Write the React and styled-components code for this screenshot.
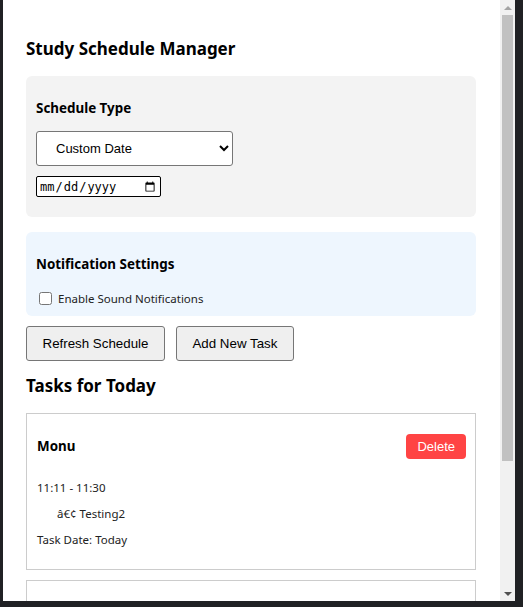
import React from 'react';
import styled, { createGlobalStyle } from 'styled-components';

const GlobalStyle = createGlobalStyle`
    html, body {
        margin:0;
        padding:0;
        background:#202124;
    }
    #root {
        height:607px;
    }
`

const Popup = styled.div`
    margin-left:3px;
    width:512px;
    height:601px;
    background:#fff;
    display:flex;
    font-family:"Noto Sans", "Open Sans", sans-serif;
    color:#000;
`
const Viewport = styled.div`
    flex:1;
    overflow:hidden;
`
const ScrollBar = styled.div`
    width:15px;
    background:#f1f1f1;
    display:flex;
    flex-direction:column;
`
const ArrowButton = styled.div`
    height:15px;
    display:flex;
    align-items:center;
    justify-content:center;
    &::before{
        content:'';
        width:0;
        height:0;
        border-left:4px solid transparent;
        border-right:4px solid transparent;
        ${props => props.$down
            ? 'border-top:4px solid #505050;'
            : 'border-bottom:4px solid #a3a3a3;'}
    }
`
const Thumb = styled.div`
    height:446px;
    margin:0 2px;
    background:#c1c1c1;
`
const Track = styled.div`
    flex:1;
`
const Content = styled.div`
    padding:37px 24px 30px 23px;
`
const Title = styled.h2`
    font-size:17px;
    font-weight:700;
    margin:0 0 15px 0;
    line-height:24px;
`
const Section = styled.div`
    background:${props => props.$tone === 'blue' ? '#eef6fe' : '#f3f3f3'};
    border-radius:6px;
    padding:10px;
    margin-bottom:${props => props.$gap || 15}px;
`
const SectionTitle = styled.h3`
    font-size:13.4px;
    font-weight:700;
    margin:13px 0 ${props => props.$after || 14}px 0;
    line-height:18px;
`
const Select = styled.select`
    display:block;
    width:197px;
    height:35px;
    padding:0 15px;
    font-family:"Liberation Sans", Arial, sans-serif;
    font-size:13px;
    color:#000;
    background:#fff;
    border:1px solid #767676;
    border-radius:3px;
    margin-bottom:10px;
`
const DateInput = styled.input`
    display:block;
    width:125px;
    height:21px;
    box-sizing:border-box;
    font-family:"DejaVu Sans Mono", monospace;
    font-size:12px;
    padding:0 2px;
    border:1px solid #000;
    border-radius:2px;
    background:#fff;
    margin-bottom:10px;
`
const CheckRow = styled.label`
    display:flex;
    align-items:center;
    gap:6px;
    font-size:11.5px;
    line-height:15px;
    color:#222;
    padding-left:3px;
`
const Check = styled.input`
    width:13px;
    height:13px;
    margin:0;
`
const ButtonRow = styled.div`
    display:flex;
    gap:11px;
    margin-bottom:13px;
`
const Button = styled.button`
    height:35px;
    padding:0 15.5px;
    font-family:"Liberation Sans", Arial, sans-serif;
    font-size:13.33px;
    color:#000;
    background:#efefef;
    border:1px solid #767676;
    border-radius:3px;
`
const SubTitle = styled.h2`
    font-size:17px;
    font-weight:700;
    margin:0 0 15px 0;
    line-height:24px;
`
const TaskCard = styled.div`
    border:1px solid #ccc;
    padding:10px 9px 10px 10px;
    margin-bottom:10px;
    min-height:${props => props.$empty ? 134 : 0}px;
`
const TaskHeader = styled.div`
    display:flex;
    align-items:center;
    justify-content:space-between;
    height:44px;
    padding-bottom:1px;
`
const TaskName = styled.h3`
    font-size:13.4px;
    font-weight:700;
    margin:0;
`
const DeleteButton = styled.button`
    height:25px;
    padding:0 11px;
    font-family:"Liberation Sans", Arial, sans-serif;
    font-size:13px;
    color:#fff;
    background:#ff4444;
    border:none;
    border-radius:4px;
`
const Line = styled.p`
    font-size:11.5px;
    line-height:14px;
    margin:12px 0 0 ${props => props.$indent ? 20 : 0}px;
    color:#222;
    &:last-child{
        margin-bottom:12px;
    }
`

const tasks = [
    { name:'Monu', time:'11:11 - 11:30', items:['â€¢ Testing2'], date:'Today' },
]

const App = () => {
    return (
        <>
            <GlobalStyle/>
            <Popup>
                <Viewport>
                    <Content>
                        <Title>Study Schedule Manager</Title>
                        <Section>
                            <SectionTitle>Schedule Type</SectionTitle>
                            <Select defaultValue="custom">
                                <option value="daily">Daily</option>
                                <option value="custom">Custom Date</option>
                            </Select>
                            <DateInput type="date"/>
                        </Section>
                        <Section $tone="blue" $gap={10}>
                            <SectionTitle $after={18}>Notification Settings</SectionTitle>
                            <CheckRow>
                                <Check type="checkbox"/>
                                Enable Sound Notifications
                            </CheckRow>
                        </Section>
                        <ButtonRow>
                            <Button>Refresh Schedule</Button>
                            <Button>Add New Task</Button>
                        </ButtonRow>
                        <SubTitle>Tasks for Today</SubTitle>
                        {tasks.map(t => (
                            <TaskCard key={t.name}>
                                <TaskHeader>
                                    <TaskName>{t.name}</TaskName>
                                    <DeleteButton>Delete</DeleteButton>
                                </TaskHeader>
                                <Line>{t.time}</Line>
                                {t.items.map(i => <Line key={i} $indent>{i}</Line>)}
                                <Line>Task Date: {t.date}</Line>
                            </TaskCard>
                        ))}
                        <TaskCard $empty/>
                    </Content>
                </Viewport>
                <ScrollBar>
                    <ArrowButton/>
                    <Thumb/>
                    <Track/>
                    <ArrowButton $down/>
                </ScrollBar>
            </Popup>
        </>
    )
}

export default App;
